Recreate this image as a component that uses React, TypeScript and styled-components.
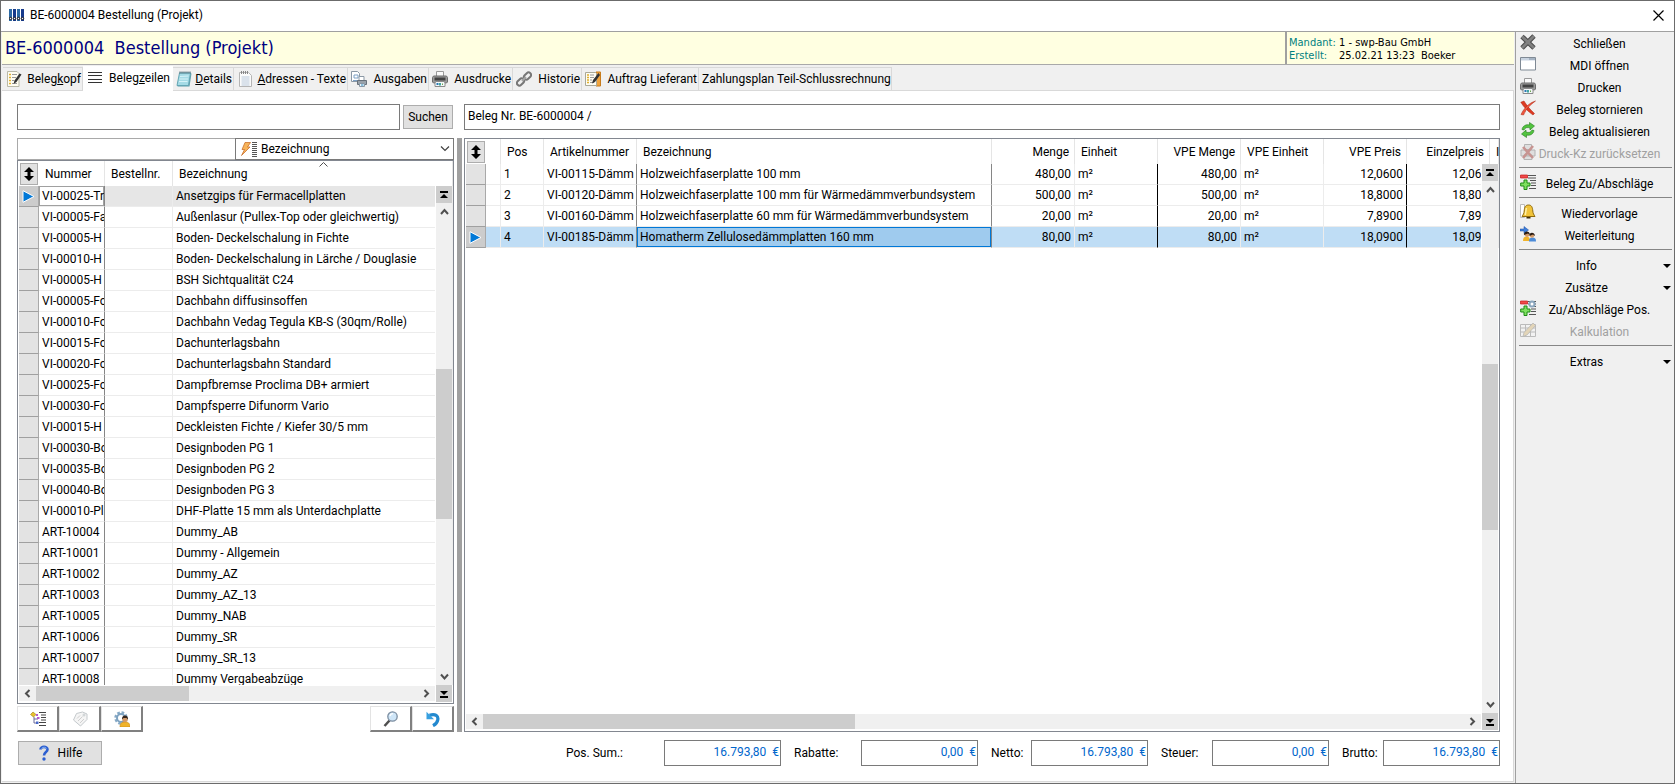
import React from "react";
import styled, { createGlobalStyle, css } from "styled-components";

const GlobalStyle = createGlobalStyle`
  *, *::before, *::after { box-sizing: border-box; }
  body { margin: 0; background: #fff; }
  body, button, input, select {
    font-family: Roboto, "Liberation Sans", sans-serif;
    font-size: 12px;
    line-height: 16px;
    color: #000;
  }
  button { cursor: default; }
`;

const face = "#f0f0f0";
const edge = "#7a7a7a";
const captionFont = '"DejaVu Sans Condensed", "DejaVu Sans", sans-serif';

/* ---------- window ---------- */

const Window = styled.div`
  display: flex;
  flex-direction: column;
  height: 100vh;
  min-height: 480px;
  border: 1px solid #6b6b6b;
  overflow: hidden;
`;

const TitleBar = styled.header`
  display: flex;
  align-items: center;
  gap: 5px;
  height: 31px;
  flex: none;
  padding: 0 10px 2px 8px;
  border-bottom: 1px solid #a0a0a0;
`;

const WindowTitle = styled.span`
  flex: 1;
`;

const CloseButton = styled.button`
  display: flex;
  padding: 0;
  border: 0;
  background: none;
`;

const Shell = styled.div`
  display: flex;
  flex: 1;
  min-height: 0;
`;

const Main = styled.main`
  display: flex;
  flex-direction: column;
  flex: 1;
  min-width: 0;
  background: ${face};
  padding: 0 1px 1px 1px;
`;

const Banner = styled.div`
  display: flex;
  flex: none;
  height: 33px;
  background: #ffffe1;
  border-bottom: 1px solid #a9a9a9;
`;

const BannerTitle = styled.h1`
  flex: 1;
  margin: 0;
  padding: 0 3px;
  font: 400 18px/31px ${captionFont};
  color: #000080;
  white-space: pre;
`;

const BannerInfo = styled.dl`
  display: grid;
  grid-template-columns: 50px 1fr;
  align-content: start;
  width: 229px;
  margin: 0;
  padding: 4px 0 0 2px;
  border-left: 2px solid #a0a0a0;
  font: 11px/13px ${captionFont};
  white-space: pre;
`;

const InfoName = styled.dt`
  color: #008080;
`;

const InfoValue = styled.dd`
  margin: 0;
`;

/* ---------- tabs ---------- */

const TabStrip = styled.div`
  display: flex;
  align-items: flex-end;
  flex: none;
  height: 26px;
  padding-left: 1px;
  border-bottom: 1px solid #d9d9d9;
`;

const Tab = styled.button<{ $active?: boolean; $width: number }>`
  display: flex;
  align-items: center;
  justify-content: space-between;
  flex: none;
  width: ${(p) => p.$width}px;
  height: 23px;
  padding: 0 1px 0 3px;
  border: solid #d9d9d9;
  border-width: 1px 1px 0 0;
  background: ${face};
  white-space: nowrap;
  ${(p) =>
    p.$active &&
    css`
      height: 25px;
      margin-bottom: -1px;
      padding: 0 2px 3px 5px;
      border-color: #fff;
      background: #fff;
    `}
`;

/* ---------- page ---------- */

const Page = styled.div`
  display: flex;
  flex-direction: column;
  gap: 8px;
  flex: 1;
  min-height: 0;
  padding: 13px 13px 15px 15px;
  background: #fff;
  border: solid #d9d9d9;
  border-width: 0 1px 1px 0;
`;

const TopRow = styled.div`
  display: flex;
  align-items: center;
  flex: none;
  gap: 10px;
`;

const SearchForm = styled.form`
  display: flex;
  align-items: center;
  gap: 3px;
  flex: none;
  width: 437px;
  padding-right: 1px;
`;

const TextField = styled.input`
  flex: 1;
  min-width: 0;
  height: 26px;
  padding: 0 3px 2px;
  border: 1px solid ${edge};
  border-radius: 0;
  background: #fff;
`;

const PushButton = styled.button<{ $wide?: boolean }>`
  display: flex;
  align-items: center;
  justify-content: center;
  gap: 8px;
  width: ${(p) => (p.$wide ? 84 : 50)}px;
  height: 24px;
  padding: 0;
  border: 1px solid #adadad;
  background: #e1e1e1;
`;

const Split = styled.div`
  display: flex;
  flex: 1;
  min-height: 0;
`;

const ArticlePane = styled.section`
  display: flex;
  flex-direction: column;
  flex: none;
  width: 437px;
`;

const Splitter = styled.div`
  flex: none;
  width: 5px;
  margin: 0 2px 0 3px;
  background: #a0a0a0;
`;

const FilterRow = styled.div`
  display: flex;
  flex: none;
  height: 22px;
`;

const FilterField = styled.input`
  width: 218px;
  height: 22px;
  padding: 0 3px;
  border: 1px solid #a9a9a9;
  border-right: 0;
`;

const FilterSelectBox = styled.label`
  display: flex;
  align-items: center;
  gap: 3px;
  flex: 1;
  padding: 0 3px 0 4px;
  border: 1px solid ${edge};
`;

const FilterSelect = styled.select`
  flex: 1;
  padding: 0;
  border: 0;
  appearance: none;
  background: #fff;
`;

/* ---------- data grid ---------- */

const GridBox = styled.div`
  display: grid;
  grid-template-columns: minmax(0, 1fr) 18px;
  grid-template-rows: 25px minmax(0, 1fr) 18px;
  flex: 1;
  min-width: 0;
  min-height: 0;
  padding: 0 0 0 1px;
  border: 1px solid #828790;
  background: #fff;
  overflow: hidden;
`;

const TableClip = styled.div`
  grid-area: 1 / 1 / 3 / 3;
  overflow: hidden;
`;

const Table = styled.table`
  width: 100%;
  table-layout: fixed;
  border-collapse: separate;
  border-spacing: 0;
`;

const Col = styled.col<{ $width?: number }>`
  width: ${(p) => (p.$width ? `${p.$width}px` : "auto")};
`;

const Head = styled.th<{ $right?: boolean }>`
  position: relative;
  height: 25px;
  padding: ${(p) => (p.$right ? "0 5px 0 0" : "0 0 0 6px")};
  border-right: 1px solid #e5e5e5;
  font-weight: 400;
  text-align: ${(p) => (p.$right ? "right" : "left")};
  white-space: nowrap;
`;

const HeadCorner = styled.th`
  height: 25px;
  padding: 0 0 0 1px;
`;

const MenuButton = styled.button`
  display: flex;
  align-items: center;
  justify-content: center;
  width: 18px;
  height: 22px;
  padding: 0;
  border: 1px solid #adadad;
  background: #e1e1e1;
`;

const SortMark = styled.span`
  position: absolute;
  top: 1px;
  left: 22px;
  right: 0;
  display: flex;
  justify-content: center;
`;

type Line = "light" | "grey" | "black";
const lineColor = { light: "#ececec", grey: "#868686", black: "#000" };

const Cell = styled.td<{ $right?: boolean; $line?: Line; $focus?: "plain" | "blue" }>`
  height: 21px;
  padding: ${(p) => (p.$right ? "0 3px 0 0" : "0 0 0 3px")};
  border-right: 1px solid ${(p) => lineColor[p.$line ?? "light"]};
  border-bottom: 1px solid #ececec;
  text-align: ${(p) => (p.$right ? "right" : "left")};
  line-height: 20px;
  white-space: nowrap;
  overflow: hidden;
  ${(p) =>
    p.$focus === "plain" &&
    css`
      background: #fff;
      box-shadow: inset 0 0 0 1px #a0a0a0;
    `}
  ${(p) =>
    p.$focus === "blue" &&
    css`
      background: #9fcbee;
      box-shadow: inset 0 0 0 1px #0078d7;
    `}
`;

const Row = styled.tr<{ $tone?: "grey" | "blue" }>`
  background: ${(p) => (p.$tone === "grey" ? "#e6e6e6" : p.$tone === "blue" ? "#bfddf5" : "#fff")};
`;

const RowMark = styled.th<{ $current?: boolean }>`
  height: 21px;
  padding: 0;
  border-right: 1px solid #a9a9a9;
  border-bottom: 1px solid #a0a0a0;
  background: ${(p) => (p.$current ? "#cccccc" : "#e3e3e3")};
  line-height: 0;
`;

const VBar = styled.div`
  grid-area: 2 / 2;
  position: relative;
  z-index: 1;
  display: flex;
  flex-direction: column;
  align-items: center;
  justify-content: space-between;
  margin-right: 1px;
  background: ${face};
  border-left: 1px solid #fff;
`;

const HBar = styled.div`
  grid-area: 3 / 1;
  display: flex;
  align-items: center;
  justify-content: space-between;
  margin-bottom: 2px;
  border-top: 1px solid #fff;
  background: ${face};
`;

const VTrack = styled.div`
  flex: 1;
  display: flex;
  flex-direction: column;
  align-self: stretch;
`;

const HTrack = styled.div`
  flex: 1;
  display: flex;
  align-self: stretch;
`;

const Space = styled.span<{ $grow: number }>`
  flex: ${(p) => p.$grow} 1 0;
`;

const Thumb = styled.span<{ $grow: number }>`
  flex: ${(p) => p.$grow} 1 0;
  background: #cdcdcd;
`;

const EndButton = styled.button`
  display: flex;
  align-items: center;
  justify-content: center;
  flex: none;
  width: 16px;
  height: 17px;
  padding: 0;
  border: 0;
  background: #cdcdcd;
`;

const Corner = styled.div`
  grid-area: 3 / 2;
  display: flex;
  justify-content: center;
  margin-right: 1px;
`;

const ArrowButton = styled.button`
  display: flex;
  align-items: center;
  justify-content: center;
  flex: none;
  width: 17px;
  height: 17px;
  padding: 0;
  border: 0;
  background: none;
`;

/* ---------- lower bars ---------- */

const ToolRow = styled.div`
  display: flex;
  flex: none;
  padding-top: 2px;
`;

const ToolButton = styled.button<{ $push?: boolean }>`
  display: flex;
  align-items: center;
  justify-content: center;
  width: 42px;
  height: 26px;
  padding: 0;
  margin-left: ${(p) => (p.$push ? "auto" : "0")};
  border: solid;
  border-width: 1px 2px 2px 1px;
  border-color: #e3e3e3 #808080 #808080 #e3e3e3;
  background: #fff;
`;

const Footer = styled.footer`
  display: flex;
  align-items: center;
  justify-content: space-between;
  flex: none;
  padding-left: 1px;
`;

const Totals = styled.div`
  display: flex;
  gap: 13px;
`;

const Total = styled.label<{ $label: number }>`
  display: grid;
  grid-template-columns: ${(p) => p.$label}px 117px;
  align-items: center;
`;

const TotalField = styled.input`
  width: 100%;
  height: 26px;
  padding: 0 1px 2px 3px;
  border: 1px solid ${edge};
  border-radius: 0;
  background: #fff;
  color: #0066cc;
  text-align: right;
  white-space: pre;
`;

/* ---------- side bar ---------- */

const Sidebar = styled.aside`
  flex: none;
  width: 159px;
  padding: 1px 2px 0 3px;
  border-left: 1px solid #a0a0a0;
  background: ${face};
`;

const Action = styled.button<{ $menu?: boolean }>`
  display: grid;
  grid-template-columns: 16px 1fr ${(p) => (p.$menu ? "26px" : "0")};
  align-items: center;
  width: 100%;
  height: 22px;
  padding: 0 ${(p) => (p.$menu ? 1 : 9)}px 1px 1px;
  border: 0;
  background: none;
  text-align: center;
  white-space: nowrap;
  &:disabled { color: #a0a0a0; }
  &:disabled svg { opacity: 0.5; filter: grayscale(0.5); }
`;

const ActionText = styled.span<{ $menu?: boolean }>`
  padding-right: ${(p) => (p.$menu ? 8 : 0)}px;
`;

const MenuMark = styled.span`
  display: flex;
  justify-content: flex-end;
`;

const Rule = styled.hr`
  margin: 2px 0 5px;
  border: 0;
  border-top: 1px solid #868686;
`;

/* ---------- icons ---------- */

const Svg = ({ w = 16, h = 16, children }: { w?: number; h?: number; children: React.ReactNode }) => (
  <svg width={w} height={h} viewBox={`0 0 ${w} ${h}`} fill="none" aria-hidden="true">
    {children}
  </svg>
);

const LogoIcon = () => (
  <Svg w={16} h={12}>
    {[0, 4, 8, 12].map((x, i) => (
      <g key={x}>
        <path d={`M${x} 0h3v12h-3z`} fill={i % 2 ? "#173a8c" : "#2d6aa5"} />
        <circle cx={x + 1.5} cy="9.5" r="1.2" fill="#eef" stroke="#111" />
      </g>
    ))}
  </Svg>
);

const CloseIcon = () => (
  <Svg w={11} h={11}>
    <path d="M.5.5l10 10M10.5.5l-10 10" stroke="#000" strokeWidth="1.2" />
  </Svg>
);

const NotePenIcon = () => (
  <Svg>
    <path d="M1.500.5h9.500l2 2v13h-11.500z" fill="#fffdf0" stroke="#b9b9a8" />
    <path d="M3 3.500h2M3 6.500h2M3 9.500h2M3 12.500h2" stroke="#e0b030" strokeWidth="1.500" />
    <path d="M6 3.500h5M6 6.500h4M6 9.500h2M6 12.500h5" stroke="#9a9a9a" />
    <path d="M13.500 2.500l2 1-5 7.500-3 2 1-3.500z" fill="#333" />
  </Svg>
);

const LinesIcon = () => (
  <Svg w={15}>
    <path d="M0 2.500h14M0 5.500h14M0 9.500h14M0 12.500h14" stroke="#333" />
  </Svg>
);

const NotebookIcon = () => (
  <Svg>
    <path d="M4 2.500h11.500l-2 13H1.500z" fill="#5f9eab" />
    <path d="M3.500 2h11l-2 12.500H1z" fill="#a5dbe6" stroke="#63a6b4" />
    <path d="M4 5.500l8.500-.5M3.500 8h8.500M3 10.500h8.500" stroke="#d6f3f8" />
    <path d="M4 .5v2M6 .5v2M8 .5v2M10 .5v2M12 .5v2M14 .5v2" stroke="#3c5c68" />
  </Svg>
);

const NotepadIcon = () => (
  <Svg>
    <path d="M2.500 1.500h9l3 3v11H2.500z" fill="#fbfbfb" stroke="#b5b5b5" />
    <path d="M4.500 6h8M4.500 8h8M4.500 10h8M4.500 12h8M4.500 14h8" stroke="#b9c9db" />
    <path d="M4.500 0v3M6.500 0v3M8.500 0v3M10.500 0v3" stroke="#888" />
  </Svg>
);

const OutputIcon = () => (
  <Svg>
    <path d="M.5.5h6l2 2v8h-8z" fill="#fff" stroke="#8b98a5" />
    <path d="M3 4h4v3H3zM2 9.500h5" stroke="#7da0c4" />
    <path d="M8 5.500h5v4H8z" fill="#fff" stroke="#8b98a5" />
    <path d="M6.500 9.500h9v4h-9z" fill="#9aa2aa" stroke="#68717a" />
    <path d="M8.500 12.500h5v3h-5z" fill="#eef6fb" stroke="#8b98a5" />
    <path d="M10 14h2.500" stroke="#2a8bc0" />
  </Svg>
);

const PrinterIcon = () => (
  <Svg>
    <path d="M4.500.5h7v5h-7z" fill="#fafafa" stroke="#9a9a9a" />
    <path d="M1.500 5h13l1 1.500V11l-1 1h-13l-1-1V6.500z" fill="#9b9b9b" stroke="#6c6c6c" />
    <path d="M2.500 6.500h11v3h-11z" fill="#424242" />
    <path d="M3.500 10.500h9l.5 2v3h-10v-3z" fill="#f4f7f9" stroke="#8a8a8a" />
    <path d="M5.500 12v2" stroke="#2978b5" strokeWidth="2" />
    <path d="M8 12v2.500" stroke="#42a6a0" strokeWidth="2" />
    <path d="M10.500 12.500v1.500" stroke="#6aa84f" />
  </Svg>
);

const ChainIcon = () => (
  <Svg>
    <g stroke="#777" strokeWidth="2">
      <rect x="7.500" y="2.500" width="8" height="5" rx="2.500" transform="rotate(-45 11.500 5)" />
      <rect x=".5" y="8.500" width="8" height="5" rx="2.500" transform="rotate(-45 4.500 11)" />
      <path d="M6 10l4-4" stroke="#a5a5a5" />
    </g>
  </Svg>
);

const OrderIcon = () => (
  <Svg>
    <path d="M11 1h4.500v14H11z" fill="#f0a33c" stroke="#c77b1b" />
    <path d="M.5 1.500h10l1 1v12H.5z" fill="#fffdf2" stroke="#a9a999" />
    <path d="M2 4h2M2 6.500h2M2 9h2M2 11.500h2" stroke="#e0b030" strokeWidth="1.500" />
    <path d="M5 4h4M5 6.500h4M5 9h2M5 11.500h4" stroke="#999" />
    <path d="M13.500 2L8 9l-1 3.500L10 11l5-7z" fill="#333" />
  </Svg>
);

const FlashListIcon = () => (
  <Svg w={18}>
    <path d="M5 1.500h5.500L7.500 6H10l-8.500 8.500L4.500 8.500H2z" fill="#f7b45a" stroke="#c4641c" strokeWidth=".7" />
    <path d="M12 1.500h5M12 3.500h5M12 5.500h5M12 7.500h5M12 9.500h5M12 11.500h5M12 13.500h5M12 15.500h5" stroke="#555" />
  </Svg>
);

const Chevron = ({ dir }: { dir: "up" | "down" | "left" | "right" }) => {
  const d = {
    up: "M1 7l3.500-4L8 7",
    down: "M1 2.500l3.500 4L8 2.500",
    left: "M6.500 1L3 4.500 6.500 8",
    right: "M2.500 1L6 4.500 2.500 8",
  }[dir];
  return (
    <Svg w={9} h={9}>
      <path d={d} stroke="#505050" strokeWidth="2" />
    </Svg>
  );
};

const DropChevron = () => (
  <Svg w={10} h={6}>
    <path d="M1 .5l4 4 4-4" stroke="#404040" strokeWidth="1.2" />
  </Svg>
);

const SortIcon = () => (
  <Svg w={9} h={5}>
    <path d="M.5 4.500l4-4 4 4" stroke="#505050" />
  </Svg>
);

const UpDownIcon = () => (
  <Svg w={10} h={14}>
    <path d="M5 0l5 5H6.500v4H10l-5 5-5-5h3.500V5H0z" fill="#000" />
  </Svg>
);

const ToTopIcon = () => (
  <Svg w={8} h={8}>
    <path d="M0 0h8v2H0zM4 3l4 4H0z" fill="#000" />
  </Svg>
);

const ToEndIcon = () => (
  <Svg w={8} h={8}>
    <path d="M0 6h8v2H0zM4 5l4-4H0z" fill="#000" />
  </Svg>
);

const CurrentIcon = () => (
  <Svg w={13} h={13}>
    <path d="M1 .7L12 6.500 1 12.300z" fill="#0078d7" stroke="#fff" />
  </Svg>
);

const TreeListIcon = () => (
  <Svg>
    <path d="M3 1l3 2.500L3.500 6 .5 3.500z" fill="#e8c22f" stroke="#9a7a10" strokeWidth=".6" />
    <path d="M4 6v6h3M4 8h4" stroke="#6a6a9a" />
    <path d="M7 6h2.500v2H7zM6 3h2v2H6z" fill="#b45ad0" />
    <path d="M6 10.500h2.500v2.500H6z" fill="#4767c9" />
    <path d="M9 1.500h7M11 4h5M11 6.500h5M11 9h5M9 11.500h7M9 14.500h7" stroke="#444" />
  </Svg>
);

const TagIcon = () => (
  <Svg>
    <path d="M4.500 2.500l6-1.500 4.500 2v5.500l-6.500 6.500L1.500 9z" fill="#f5f5f5" stroke="#c4c9cc" />
    <path d="M5 7.500l3-3M6 10l4.500-4.500M8 12l4-4" stroke="#cfcfcf" />
    <circle cx="12" cy="4" r="1" fill="#fff" stroke="#c4c9cc" />
  </Svg>
);

const GearUserIcon = () => (
  <Svg>
    <circle cx="7" cy="7" r="5.500" stroke="#86a9c6" strokeWidth="2.500" strokeDasharray="2.600 1.700" />
    <circle cx="7" cy="7" r="4" fill="#fff" stroke="#7ea2c0" strokeWidth="2" />
    <path d="M6 16c0-4 2-5 5-5s5 1 5 5z" fill="#f0b32a" stroke="#c98a12" strokeWidth=".6" />
    <circle cx="11" cy="8.500" r="2.700" fill="#d39a68" />
    <path d="M8 8.500c0-3 1-4 3-4s3 1 3 4l-1.500-1.500h-3z" fill="#33241b" />
  </Svg>
);

const LensIcon = () => (
  <Svg>
    <path d="M6.500 9.500L1.500 15" stroke="#4f4f4f" strokeWidth="2.500" />
    <circle cx="9.500" cy="5.500" r="4.700" fill="#cfe6f8" stroke="#7b8da0" strokeWidth="1.300" />
    <path d="M7 5c.4-1.600 1.500-2.400 3-2.400" stroke="#fff" strokeWidth="1.300" />
  </Svg>
);

const UndoIcon = () => (
  <Svg>
    <path d="M4.500 4.200c6-2 9 1 8.300 4.500-.4 2.500-2 4.500-4.800 6" stroke="#2389cf" strokeWidth="3.200" />
    <path d="M1.500.8v7.400H9z" fill="#37a0e0" />
  </Svg>
);

const HelpIcon = () => (
  <Svg w={12}>
    <path d="M2.500 4.500C2.500 1 9.500 1 9.500 4.500 9.500 7 6 7 6 10.500" stroke="#2c5fd0" strokeWidth="2.600" />
    <path d="M3.500 3.500C4.500 1.700 8 1.800 8.500 3.500" stroke="#84b0f3" />
    <circle cx="6" cy="14" r="1.700" fill="#2c5fd0" />
  </Svg>
);

const CrossIcon = () => (
  <Svg>
    <path d="M2 2.500l12 11.500M14 2L2 14" stroke="#4c4c4c" strokeWidth="4.800" />
    <path d="M2 2.500l12 11.500M14 2L2 14" stroke="#808080" strokeWidth="2.800" />
  </Svg>
);

const FrameIcon = () => (
  <Svg>
    <path d="M.5 1.500h15v12.500H.5z" fill="#fff" stroke="#7f8994" />
    <path d="M1 2h14v2.500H1z" fill="#c8d3e0" />
    <path d="M9.500 3h1M11.500 3h1M13.500 3h1" stroke="#3f536b" />
  </Svg>
);

const RedCrossIcon = () => (
  <Svg>
    <path d="M.8 2.200L4 1c2 3.500 6 8.500 10.500 12.500l-1.500 1.500C8 11.500 4 7.500.8 2.200z" fill="#de3a22" stroke="#a9250f" strokeWidth=".5" />
    <path d="M15.500 1C10.500 4.500 6 9 3.500 15L1 14.500C4 8 9 3 15.500 1z" fill="#ef5640" stroke="#a9250f" strokeWidth=".5" />
  </Svg>
);

const RefreshIcon = () => (
  <Svg>
    <g fill="#52c43f" stroke="#237a1c" strokeWidth=".6">
      <path d="M2 7.500C2.500 4 6 2 9.500 3V.5l5 3.500-4.500 4V6C7.500 5 5 5.500 4 8z" />
      <path d="M14 8.500c-.5 3.500-4 5.500-7.500 4.500v2.500l-5-3.500L6 8v2c2.500 1 5 .5 6-2z" />
    </g>
  </Svg>
);

const PrintOffIcon = () => (
  <Svg>
    <path d="M4.500.5h7v5h-7zM1 6h14v6H1zM4 11h8v4.500H4z" fill="#d0d0d0" stroke="#777" />
    <path d="M3 3l10 11M13 2L3 14" stroke="#f0251a" strokeWidth="2.600" />
  </Svg>
);

const SurchargeIcon = ({ gear }: { gear?: boolean }) => (
  <Svg>
    <path d="M8 1.500h8M8 4h8M10 6.500h6M11 9h5M11 11.500h5M9 14.500h7" stroke="#555" />
    <path d="M.5 1h7v3h-7z" fill="#f04a4a" stroke="#c41818" strokeWidth=".7" />
    <path d="M4 6h3v3h3v3H7v3.500H4V12H.7V9H4z" fill="#7ee05f" stroke="#1d8a15" />
    {gear && <circle cx="12" cy="4" r="2.500" fill="#fff" stroke="#8aa6be" strokeWidth="2" />}
  </Svg>
);

const BellIcon = () => (
  <Svg>
    <path d="M.5.5h4v13h-4z" fill="#fff" stroke="#bbb" />
    <path d="M8.500 1c3 0 4 2 4.300 6 .2 2.500 1 3.500 2.200 5.500H2C3.200 10.500 4 9.500 4.200 7c.3-4 1.300-6 4.300-6z" fill="#f0c33a" stroke="#8f6a0c" />
    <path d="M6.500 4c-.8 2-.5 4-1.300 7" stroke="#fff1a8" strokeWidth="1.500" />
    <path d="M6.500 13h4v1.500h-4z" fill="#3d2c06" />
  </Svg>
);

const ForwardIcon = () => (
  <Svg>
    <path d="M0 3h4V.5L8.500 4 4 7.500V5H0z" fill="#3f7fdc" stroke="#1d4f9f" strokeWidth=".5" />
    <path d="M3 15c0-3 1-4.500 3.500-4.500S10 12 10 15z" fill="#f0b32a" />
    <path d="M9 15.500c0-3 1-4 3.500-4s3.500 1 3.500 4z" fill="#4c8bd8" />
    <circle cx="7" cy="8.500" r="2.400" fill="#d39a68" />
    <path d="M4 9c-.5-4 5.500-5 6 0L8 7.500z" fill="#2b1c14" />
    <circle cx="12" cy="9.500" r="2.200" fill="#d39a68" />
    <path d="M9.500 10c-.5-4 5-4.500 5.500 0l-2-1.500z" fill="#2b1c14" />
  </Svg>
);

const CalcIcon = () => (
  <Svg>
    <path d="M.5 2.500h15v12H.5zM.5 6h15M.5 10h15M5.500 2.500v12M10.500 2.500v12" fill="#f4f4f4" stroke="#888" />
    <path d="M13 1L4 10.500l-1 4L7 13l8.500-9.500z" fill="#f0bb45" stroke="#777" strokeWidth=".7" />
  </Svg>
);

const MenuArrow = () => (
  <Svg w={8} h={4}>
    <path d="M0 0h8L4 4z" fill="#000" />
  </Svg>
);

/* ---------- data ---------- */

const tabs: { label: React.ReactNode; icon?: React.ReactNode; width: number; active?: boolean }[] = [
  { label: <>Beleg<u>k</u>opf</>, icon: <NotePenIcon />, width: 80 },
  { label: <>Beleg<u>z</u>eilen</>, icon: <LinesIcon />, width: 90, active: true },
  { label: <><u>D</u>etails</>, icon: <NotebookIcon />, width: 61 },
  { label: <><u>A</u>dressen - Texte</>, icon: <NotepadIcon />, width: 114 },
  { label: "Ausgaben", icon: <OutputIcon />, width: 81 },
  { label: "Ausdrucke", icon: <PrinterIcon />, width: 84 },
  { label: "Historie", icon: <ChainIcon />, width: 69 },
  { label: "Auftrag Lieferant", icon: <OrderIcon />, width: 117 },
  { label: "Zahlungsplan Teil-Schlussrechnung", width: 193 },
];

const articles: [string, string][] = [
  ["VI-00025-Tr", "Ansetzgips für Fermacellplatten"],
  ["VI-00005-Fa", "Außenlasur (Pullex-Top oder gleichwertig)"],
  ["VI-00005-H", "Boden- Deckelschalung in Fichte"],
  ["VI-00010-H", "Boden- Deckelschalung in Lärche / Douglasie"],
  ["VI-00005-H", "BSH Sichtqualität C24"],
  ["VI-00005-Fo", "Dachbahn diffusinsoffen"],
  ["VI-00010-Fo", "Dachbahn Vedag Tegula KB-S (30qm/Rolle)"],
  ["VI-00015-Fo", "Dachunterlagsbahn"],
  ["VI-00020-Fo", "Dachunterlagsbahn Standard"],
  ["VI-00025-Fo", "Dampfbremse Proclima DB+ armiert"],
  ["VI-00030-Fo", "Dampfsperre Difunorm Vario"],
  ["VI-00015-H", "Deckleisten Fichte / Kiefer 30/5 mm"],
  ["VI-00030-Bo", "Designboden PG 1"],
  ["VI-00035-Bo", "Designboden PG 2"],
  ["VI-00040-Bo", "Designboden PG 3"],
  ["VI-00010-Pl", "DHF-Platte 15 mm als Unterdachplatte"],
  ["ART-10004", "Dummy_AB"],
  ["ART-10001", "Dummy - Allgemein"],
  ["ART-10002", "Dummy_AZ"],
  ["ART-10003", "Dummy_AZ_13"],
  ["ART-10005", "Dummy_NAB"],
  ["ART-10006", "Dummy_SR"],
  ["ART-10007", "Dummy_SR_13"],
  ["ART-10008", "Dummy Vergabeabzüge"],
];

const positions = [
  { nr: "VI-00115-Dämm", name: "Holzweichfaserplatte 100 mm", qty: "480,00", price: "12,0600" },
  { nr: "VI-00120-Dämm", name: "Holzweichfaserplatte 100 mm für Wärmedämmverbundsystem", qty: "500,00", price: "18,8000" },
  { nr: "VI-00160-Dämm", name: "Holzweichfaserplatte 60 mm für Wärmedämmverbundsystem", qty: "20,00", price: "7,8900" },
  { nr: "VI-00185-Dämm", name: "Homatherm Zellulosedämmplatten 160 mm", qty: "80,00", price: "18,0900" },
];

const totals = [
  { label: "Pos. Sum.:", value: "16.793,80  €", width: 98 },
  { label: "Rabatte:", value: "0,00  €", width: 67 },
  { label: "Netto:", value: "16.793,80  €", width: 40 },
  { label: "Steuer:", value: "0,00  €", width: 51 },
  { label: "Brutto:", value: "16.793,80  €", width: 41 },
];

const actionGroups: { label: string; icon?: React.ReactNode; menu?: boolean; off?: boolean }[][] = [
  [
    { label: "Schließen", icon: <CrossIcon /> },
    { label: "MDI öffnen", icon: <FrameIcon /> },
    { label: "Drucken", icon: <PrinterIcon /> },
    { label: "Beleg stornieren", icon: <RedCrossIcon /> },
    { label: "Beleg aktualisieren", icon: <RefreshIcon /> },
    { label: "Druck-Kz zurücksetzen", icon: <PrintOffIcon />, off: true },
  ],
  [{ label: "Beleg Zu/Abschläge", icon: <SurchargeIcon /> }],
  [
    { label: "Wiedervorlage", icon: <BellIcon /> },
    { label: "Weiterleitung", icon: <ForwardIcon /> },
  ],
  [
    { label: "Info", menu: true },
    { label: "Zusätze", menu: true },
    { label: "Zu/Abschläge Pos.", icon: <SurchargeIcon gear /> },
    { label: "Kalkulation", icon: <CalcIcon />, off: true },
  ],
  [{ label: "Extras", menu: true }],
];

/* ---------- parts ---------- */

type Parts = [number, number, number];

const DataGrid = ({ v, h, children }: { v: Parts; h: Parts; children: React.ReactNode }) => (
  <GridBox>
    <TableClip>{children}</TableClip>
    <VBar>
      <EndButton aria-label="Zum Anfang"><ToTopIcon /></EndButton>
      <ArrowButton aria-label="Nach oben"><Chevron dir="up" /></ArrowButton>
      <VTrack><Space $grow={v[0]} /><Thumb $grow={v[1]} /><Space $grow={v[2]} /></VTrack>
      <ArrowButton aria-label="Nach unten"><Chevron dir="down" /></ArrowButton>
    </VBar>
    <HBar>
      <ArrowButton aria-label="Nach links"><Chevron dir="left" /></ArrowButton>
      <HTrack><Space $grow={h[0]} /><Thumb $grow={h[1]} /><Space $grow={h[2]} /></HTrack>
      <ArrowButton aria-label="Nach rechts"><Chevron dir="right" /></ArrowButton>
    </HBar>
    <Corner>
      <EndButton aria-label="Zum Ende"><ToEndIcon /></EndButton>
    </Corner>
  </GridBox>
);

const HeaderMenu = () => (
  <HeadCorner>
    <MenuButton aria-label="Spalten"><UpDownIcon /></MenuButton>
  </HeadCorner>
);

const ArticleTable = () => (
  <Table>
    <colgroup>
      <Col $width={20} /><Col $width={66} /><Col $width={68} /><Col />
    </colgroup>
    <thead>
      <tr>
        <HeaderMenu />
        <Head>Nummer</Head>
        <Head>Bestellnr.</Head>
        <Head>Bezeichnung<SortMark><SortIcon /></SortMark></Head>
      </tr>
    </thead>
    <tbody>
      {articles.map(([nr, name], i) => (
        <Row key={i} $tone={i === 0 ? "grey" : undefined}>
          <RowMark $current={i === 0}>{i === 0 && <CurrentIcon />}</RowMark>
          <Cell $line="grey" $focus={i === 0 ? "plain" : undefined}>{nr}</Cell>
          <Cell />
          <Cell>{name}</Cell>
        </Row>
      ))}
    </tbody>
  </Table>
);

const PositionTable = () => (
  <Table>
    <colgroup>
      {[20, 15, 43, 93, 355, 83, 83, 83, 83, 83, 83].map((w, i) => <Col key={i} $width={w} />)}
      <Col />
    </colgroup>
    <thead>
      <tr>
        <HeaderMenu />
        <Head />
        <Head>Pos</Head>
        <Head>Artikelnummer</Head>
        <Head>Bezeichnung</Head>
        <Head $right>Menge</Head>
        <Head>Einheit</Head>
        <Head $right>VPE Menge</Head>
        <Head>VPE Einheit</Head>
        <Head $right>VPE Preis</Head>
        <Head $right>Einzelpreis</Head>
        <Head>I</Head>
      </tr>
    </thead>
    <tbody>
      {positions.map((p, i) => {
        const current = i === 3;
        return (
          <Row key={p.nr} $tone={current ? "blue" : undefined}>
            <RowMark $current={current}>{current && <CurrentIcon />}</RowMark>
            <Cell />
            <Cell>{i + 1}</Cell>
            <Cell $line="grey">{p.nr}</Cell>
            <Cell $line="grey" $focus={current ? "blue" : undefined}>{p.name}</Cell>
            <Cell $right>{p.qty}</Cell>
            <Cell $line="black">m²</Cell>
            <Cell $right>{p.qty}</Cell>
            <Cell>m²</Cell>
            <Cell $right $line="black">{p.price}</Cell>
            <Cell $right colSpan={2}>{p.price}</Cell>
          </Row>
        );
      })}
    </tbody>
  </Table>
);

export default function App() {
  return (
    <Window>
      <GlobalStyle />
      <TitleBar>
        <LogoIcon />
        <WindowTitle>BE-6000004 Bestellung (Projekt)</WindowTitle>
        <CloseButton aria-label="Fenster schließen"><CloseIcon /></CloseButton>
      </TitleBar>
      <Shell>
        <Main>
          <Banner>
            <BannerTitle>{"BE-6000004  Bestellung (Projekt)"}</BannerTitle>
            <BannerInfo>
              <InfoName>Mandant:</InfoName>
              <InfoValue>1 - swp-Bau GmbH</InfoValue>
              <InfoName>Erstellt:</InfoName>
              <InfoValue>{"25.02.21 13:23  Boeker"}</InfoValue>
            </BannerInfo>
          </Banner>
          <TabStrip role="tablist">
            {tabs.map((t, i) => (
              <Tab key={i} role="tab" aria-selected={!!t.active} $active={t.active} $width={t.width}>
                {t.icon}
                <span>{t.label}</span>
              </Tab>
            ))}
          </TabStrip>
          <Page>
            <TopRow>
              <SearchForm onSubmit={(e) => e.preventDefault()}>
                <TextField aria-label="Suchbegriff" />
                <PushButton>Suchen</PushButton>
              </SearchForm>
              <TextField aria-label="Beleg" defaultValue="Beleg Nr. BE-6000004 /" />
            </TopRow>
            <Split>
              <ArticlePane>
                <FilterRow>
                  <FilterField aria-label="Filter" />
                  <FilterSelectBox>
                    <FlashListIcon />
                    <FilterSelect aria-label="Suchspalte">
                      <option>Bezeichnung</option>
                    </FilterSelect>
                    <DropChevron />
                  </FilterSelectBox>
                </FilterRow>
                <DataGrid v={[149, 149, 149]} h={[0, 153, 229]}>
                  <ArticleTable />
                </DataGrid>
                <ToolRow>
                  <ToolButton aria-label="Baumansicht"><TreeListIcon /></ToolButton>
                  <ToolButton aria-label="Etikett" disabled><TagIcon /></ToolButton>
                  <ToolButton aria-label="Benutzereinstellungen"><GearUserIcon /></ToolButton>
                  <ToolButton aria-label="Suchen" $push><LensIcon /></ToolButton>
                  <ToolButton aria-label="Zurück"><UndoIcon /></ToolButton>
                </ToolRow>
              </ArticlePane>
              <Splitter />
              <DataGrid v={[165, 166, 165]} h={[0, 372, 609]}>
                <PositionTable />
              </DataGrid>
            </Split>
            <Footer>
              <PushButton $wide><HelpIcon />Hilfe</PushButton>
              <Totals>
                {totals.map((t) => (
                  <Total key={t.label} $label={t.width}>
                    {t.label}
                    <TotalField readOnly value={t.value} />
                  </Total>
                ))}
              </Totals>
            </Footer>
          </Page>
        </Main>
        <Sidebar>
          {actionGroups.map((group, i) => (
            <React.Fragment key={i}>
              {i > 0 && <Rule />}
              {group.map((a) => (
                <Action key={a.label} $menu={a.menu} disabled={a.off}>
                  <span>{a.icon}</span>
                  <ActionText $menu={a.menu}>{a.label}</ActionText>
                  {a.menu && <MenuMark><MenuArrow /></MenuMark>}
                </Action>
              ))}
            </React.Fragment>
          ))}
        </Sidebar>
      </Shell>
    </Window>
  );
}
